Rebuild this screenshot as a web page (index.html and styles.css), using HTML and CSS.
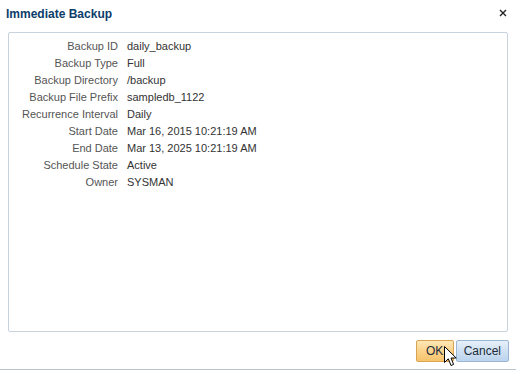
FILE: index.html
```html
<!DOCTYPE html>
<html lang="en">
<head>
    <meta charset="UTF-8">
    <title>Immediate Backup</title>
    <link rel="stylesheet" href="styles.css">
</head>
<body>
    <div class="dialog">
        <header class="dialog-header">
            <h1>Immediate Backup</h1>
            <button class="close-button" title="Close">
                <svg width="8" height="8" viewBox="0 0 8 8"><path d="M1 1L7 7M7 1L1 7" stroke="#222" stroke-width="1.4"/></svg>
            </button>
        </header>

        <div class="dialog-body">
            <dl class="details">
                <dt>Backup ID</dt><dd>daily_backup</dd>
                <dt>Backup Type</dt><dd>Full</dd>
                <dt>Backup Directory</dt><dd>/backup</dd>
                <dt>Backup File Prefix</dt><dd>sampledb_1122</dd>
                <dt>Recurrence Interval</dt><dd>Daily</dd>
                <dt>Start Date</dt><dd>Mar 16, 2015 10:21:19 AM</dd>
                <dt>End Date</dt><dd>Mar 13, 2025 10:21:19 AM</dd>
                <dt>Schedule State</dt><dd>Active</dd>
                <dt>Owner</dt><dd>SYSMAN</dd>
            </dl>
        </div>

        <footer class="dialog-footer">
            <button class="btn btn-ok">OK</button>
            <button class="btn">Cancel</button>
            <!-- mouse pointer hovering the OK button -->
            <svg class="pointer" width="13" height="21" viewBox="0 0 13 21">
                <path d="M0.5 0.5V16.5L4.3 12.8L7 19.5L9.6 18.4L7 12H12.2Z" fill="#fff" stroke="#000" stroke-width="1"/>
            </svg>
        </footer>
    </div>
</body>
</html>
```

FILE: styles.css
```css
body {
    margin: 0;
    padding: 0;
    background-color: #fff;
    font-family: 'Liberation Sans', Arial, sans-serif;
    font-size: 11px;
    color: #333;
}

.dialog {
    position: relative;
    height: 369px;
    display: flex;
    flex-direction: column;
    border-bottom: 1px solid #b9c3cc;
}

.dialog-header {
    height: 32px;
    box-sizing: border-box;
    padding: 6px 6px 0 6px;
    display: flex;
    justify-content: space-between;
    align-items: flex-start;
}

h1 {
    margin: 0;
    font-size: 12px;
    line-height: 16px;
    font-weight: 700;
    color: #0b3d6b;
}

.close-button {
    margin: 2px 2px 0 0;
    padding: 0;
    border: none;
    background: none;
    width: 10px;
    height: 10px;
    display: flex;
    align-items: center;
    justify-content: center;
    cursor: pointer;
}

.dialog-body {
    flex: 1;
    margin: 0 8px;
    border: 1px solid #c6d2de;
    border-radius: 2px;
    padding-top: 5px;
}

.details {
    margin: 0;
    display: grid;
    grid-template-columns: 109px auto;
    column-gap: 9px;
    line-height: 17px;
}

.details dt {
    text-align: right;
    color: #555;
    white-space: nowrap;
}

.details dd {
    margin: 0;
    color: #333;
}

.dialog-footer {
    height: 37px;
    box-sizing: border-box;
    padding: 8px 7px 0 0;
    display: flex;
    justify-content: flex-end;
    align-items: flex-start;
    gap: 2px;
}

.btn {
    height: 22px;
    padding: 0 7px;
    font-family: 'Liberation Sans', Arial, sans-serif;
    font-size: 12px;
    color: #1e2c3a;
    border: 1px solid #9bb6d3;
    border-radius: 2px;
    background: linear-gradient(#e6f0fa, #cfe0f2 50%, #bcd4ee);
    cursor: pointer;
}

.btn-ok {
    width: 38px;
    border-color: #d9a552;
    background: linear-gradient(#fde7b6, #fbd38c 50%, #f7c36c);
}

.pointer {
    position: absolute;
    left: 444px;
    top: 346px;
}
```
